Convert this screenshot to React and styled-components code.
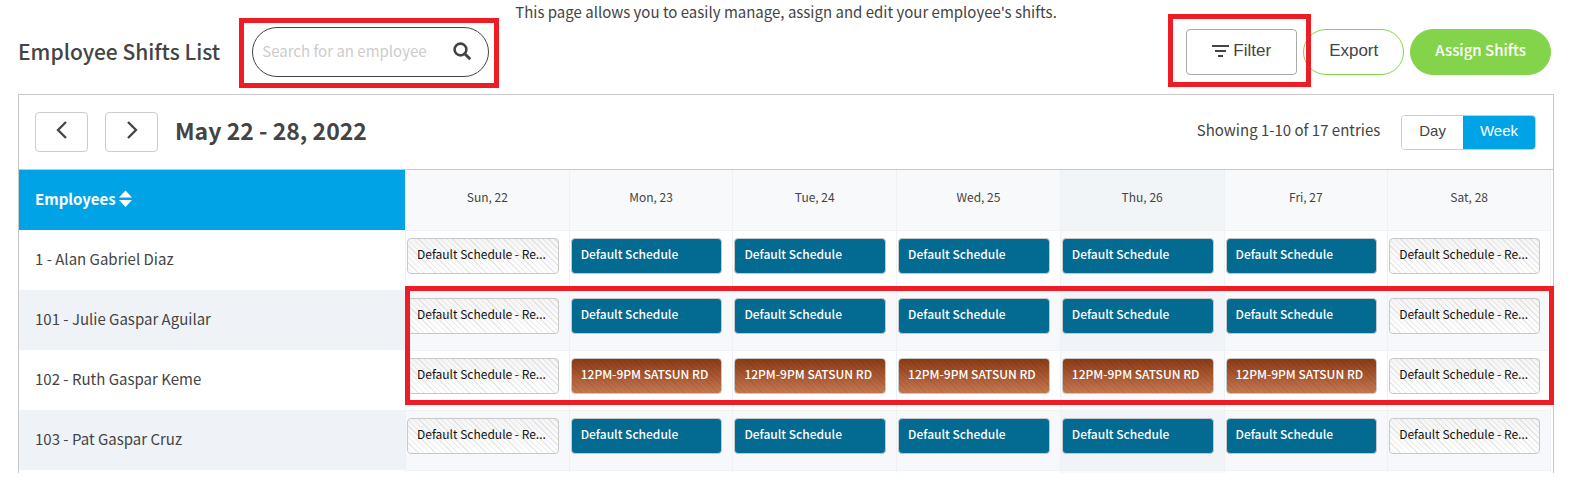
import React from "react";
import styled, { createGlobalStyle, css } from "styled-components";

const sans = '"Noto Sans CJK SC", "Noto Sans", sans-serif';
const arial = '"Liberation Sans", Arial, sans-serif';

const GlobalStyle = createGlobalStyle`
  *, *::before, *::after { box-sizing: border-box; }
  body {
    margin: 0;
    background: #fff;
    color: #444;
    font: 400 15px/24px ${sans};
  }
  button, input { font: inherit; color: inherit; }
  button { cursor: pointer; }
`;

const Page = styled.main`
  padding: 0 21px 26px 18px;
`;

const Intro = styled.p`
  margin: 0;
  height: 27px;
  text-align: center;
`;

const Header = styled.header`
  display: flex;
  align-items: center;
  gap: 32px;
  margin-bottom: 17px;
  padding-right: 3px;
`;

const Title = styled.h1`
  margin: 0;
  padding-bottom: 2px;
  font-size: 21px;
  line-height: 32px;
  font-weight: 500;
  white-space: nowrap;
`;

const Highlight = styled.div`
  position: absolute;
  inset: ${(p) => p.$inset};
  height: ${(p) => p.$height || "auto"};
  border: 5px solid #ee1c24;
  pointer-events: none;
  z-index: 2;
`;

const SearchBox = styled.label`
  position: relative;
  display: flex;
  align-items: center;
  width: 237px;
  height: 50px;
  padding: 0 17px 2px 9px;
  border: 1px solid #444;
  border-radius: 25px;
`;

const SearchInput = styled.input`
  flex: 1;
  min-width: 0;
  height: 24px;
  padding: 0;
  border: 0;
  outline: 0;
  background: none;
  &::placeholder { color: #ccc; opacity: 1; }
`;

const Actions = styled.div`
  display: flex;
  gap: 6px;
  margin-left: auto;
`;

const FilterSlot = styled.div`
  position: relative;
`;

const Button = styled.button`
  display: flex;
  align-items: center;
  justify-content: center;
  gap: 4px;
  height: 46px;
  padding: 0 25px 3px;
  font-family: ${arial};
  font-size: 17px;
  background: #fff;
  border: 1px solid #84d44b;
  border-radius: 23px;
  ${(p) => p.$kind === "outline" && css`
    border-color: #aaa;
    border-radius: 4px;
  `}
  ${(p) => p.$kind === "primary" && css`
    padding: 0 24px 4px;
    font: 500 15px/24px ${sans};
    color: #fff;
    background: #84d44b;
  `}
`;

const Panel = styled.section`
  border: 1px solid #c8c8c8;
  border-bottom: 0;
`;

const Toolbar = styled.div`
  display: flex;
  align-items: center;
  gap: 17px;
  height: 75px;
  padding: 0 17px 0 16px;
  border-bottom: 1px solid #c8c8c8;
`;

const ArrowButton = styled.button`
  display: flex;
  align-items: center;
  justify-content: center;
  width: 53px;
  height: 40px;
  padding: 0 0 4px;
  background: #fff;
  border: 1px solid #ccc;
  border-radius: 4px;
`;

const Range = styled.h2`
  margin: 0;
  padding-bottom: 4px;
  font-size: 23px;
  line-height: 32px;
  font-weight: 700;
`;

const Entries = styled.span`
  margin-left: auto;
  padding-bottom: 4px;
`;

const Toggle = styled.div`
  display: flex;
  height: 35px;
  margin-left: 4px;
  border: 1px solid #ccc;
  border-radius: 4px;
  overflow: hidden;
`;

const ToggleButton = styled.button`
  padding: 0 17px 2px;
  border: 0;
  font-family: ${arial};
  font-size: 15px;
  color: ${(p) => (p.$active ? "#fff" : "#444")};
  background: ${(p) => (p.$active ? "#00a4e6" : "#fff")};
`;

const TableWrap = styled.div`
  position: relative;
  padding-right: 2px;
`;

const Table = styled.table`
  width: 100%;
  table-layout: fixed;
  border-collapse: separate;
  border-spacing: 0;
`;

const EmployeeHead = styled.th`
  width: 386px;
  height: 60px;
  padding: 0 16px 2px;
  text-align: left;
  color: #fff;
  background: #00a4e6;
`;

const SortButton = styled.button`
  display: flex;
  align-items: center;
  gap: 3px;
  padding: 0;
  border: 0;
  font-size: 15px;
  font-weight: 700;
  background: none;
`;

const DayHead = styled.th`
  padding: 0 0 6px;
  font-size: 12px;
  line-height: 20px;
  font-weight: 400;
  background: ${(p) => (p.$today ? "#f1f5f8" : "#f7f9fb")};
  border-left: 1px solid #eff2f5;
  &:last-child { border-right: 1px solid #eff2f5; }
`;

const Row = styled.tr`
  --name: ${(p) => (p.$shaded ? "#eff3f7" : "#fff")};
  --day: ${(p) => (p.$shaded ? "#f7f8fb" : "#fff")};
  --today: ${(p) => (p.$shaded ? "#f0f4f8" : "#f8fafb")};
`;

const NameCell = styled.th`
  height: 60px;
  padding: 0 16px 2px;
  text-align: left;
  font-weight: 400;
  background: var(--name);
`;

const DayCell = styled.td`
  padding: 7px 10px 0 1px;
  vertical-align: top;
  border-top: 1px solid #eff2f5;
  border-left: 1px solid #eff2f5;
  background: ${(p) => (p.$today ? "var(--today)" : "var(--day)")};
  &:last-child { border-right: 1px solid #eff2f5; }
`;

const EndCell = styled(DayCell)`
  height: 3px;
  padding: 0;
  &:first-child { border: 0; }
`;

const kinds = {
  rest: css`
    color: #111;
    font-weight: 400;
    background: repeating-linear-gradient(45deg, transparent 0 3px, #00000014 3px 4px),
      linear-gradient(#f5f5f5, #fff);
  `,
  normal: css`
    background: #036a91;
  `,
  custom: css`
    background: repeating-linear-gradient(45deg, transparent 0 3px, #00000012 3px 4px),
      linear-gradient(#8a3a14, #c67850);
  `,
};

const Shift = styled.button`
  display: block;
  width: 100%;
  height: 36px;
  padding: 0 9px 4px;
  border: 1px solid #c8c8c8;
  border-radius: 4px;
  text-align: left;
  font-size: 12px;
  line-height: 20px;
  font-weight: 500;
  color: #fff;
  white-space: nowrap;
  overflow: hidden;
  ${(p) => kinds[p.$kind]}
`;

const days = ["Sun, 22", "Mon, 23", "Tue, 24", "Wed, 25", "Thu, 26", "Fri, 27", "Sat, 28"];
const TODAY = 4;
const employees = [
  { name: "1 - Alan Gabriel Diaz", kind: "normal" },
  { name: "101 - Julie Gaspar Aguilar", kind: "normal" },
  { name: "102 - Ruth Gaspar Keme", kind: "custom" },
  { name: "103 - Pat Gaspar Cruz", kind: "normal" },
];
const labels = {
  rest: "Default Schedule - Re...",
  normal: "Default Schedule",
  custom: "12PM-9PM SATSUN RD",
};

const SearchIcon = () => (
  <svg width="18" height="18" viewBox="0 0 18 18" fill="none" stroke="#444" aria-hidden="true">
    <circle cx="7.5" cy="7.5" r="5.9" strokeWidth="2.6" />
    <path d="M11.7 11.7L16.3 16.3" strokeWidth="3" strokeLinecap="round" />
  </svg>
);

const FilterIcon = () => (
  <svg width="17" height="12" viewBox="0 0 17 12" fill="#444" aria-hidden="true">
    <path d="M0 0h17v2H0zM3 5h11v2H3zM6 10h5v2H6z" />
  </svg>
);

const Arrow = ({ d }) => (
  <svg width="12" height="18" viewBox="0 0 12 18" fill="none" stroke="#444" strokeWidth="2.3" aria-hidden="true">
    <path d={d} />
  </svg>
);

const SortIcon = () => (
  <svg width="13" height="18" viewBox="0 0 13 18" fill="#fff" aria-hidden="true">
    <path d="M6.5 0.5L13 7.5H0zM0 10h13L6.5 17z" />
  </svg>
);

export default function App() {
  return (
    <Page>
      <GlobalStyle />
      <Intro>This page allows you to easily manage, assign and edit your employee's shifts.</Intro>
      <Header>
        <Title>Employee Shifts List</Title>
        <SearchBox>
          <SearchInput type="text" aria-label="Search for an employee" placeholder="Search for an employee" />
          <SearchIcon />
          <Highlight $inset="-10px -11px -12px -14px" />
        </SearchBox>
        <Actions>
          <FilterSlot>
            <Button $kind="outline"><FilterIcon />Filter</Button>
            <Highlight $inset="-15px -14px -12px -18px" />
          </FilterSlot>
          <Button>Export</Button>
          <Button $kind="primary">Assign Shifts</Button>
        </Actions>
      </Header>
      <Panel>
        <Toolbar>
          <ArrowButton aria-label="Previous week"><Arrow d="M10 1L2 9l8 8" /></ArrowButton>
          <ArrowButton aria-label="Next week"><Arrow d="M2 1l8 8-8 8" /></ArrowButton>
          <Range>May 22 - 28, 2022</Range>
          <Entries>Showing 1-10 of 17 entries</Entries>
          <Toggle>
            <ToggleButton>Day</ToggleButton>
            <ToggleButton $active>Week</ToggleButton>
          </Toggle>
        </Toolbar>
        <TableWrap>
          <Table>
            <thead>
              <tr>
                <EmployeeHead><SortButton>Employees <SortIcon /></SortButton></EmployeeHead>
                {days.map((d, i) => <DayHead key={d} $today={i === TODAY}>{d}</DayHead>)}
              </tr>
            </thead>
            <tbody>
              {employees.map((e, r) => (
                <Row key={e.name} $shaded={r % 2 === 1}>
                  <NameCell scope="row">{e.name}</NameCell>
                  {days.map((d, i) => {
                    const kind = i === 0 || i === 6 ? "rest" : e.kind;
                    return (
                      <DayCell key={d} $today={i === TODAY}>
                        <Shift $kind={kind}>{labels[kind]}</Shift>
                      </DayCell>
                    );
                  })}
                </Row>
              ))}
              <Row aria-hidden="true">
                <EndCell />
                {days.map((d, i) => <EndCell key={d} $today={i === TODAY} />)}
              </Row>
            </tbody>
          </Table>
          <Highlight $inset="116px -1px auto 386px" $height="119px" />
        </TableWrap>
      </Panel>
    </Page>
  );
}
